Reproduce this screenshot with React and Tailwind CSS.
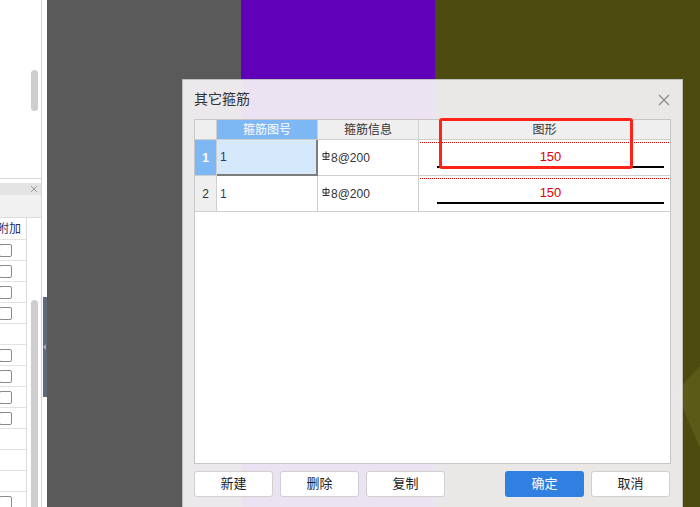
import React from "react";

const font = { fontFamily: '"Liberation Sans", "Noto Sans CJK SC", sans-serif' };

const checkRows = [true, true, true, true, false, true, true, true, true, false, false, false, true];

const SteelMark = () => (
  <svg width="8" height="10" viewBox="0 0 8 10" className="inline-block mr-[1px] -mt-[4px]">
    <path d="M1 2.5h6v3.5H1z M4 0.5v8 M0.5 8.5h7" fill="none" stroke="#333" strokeWidth="1" />
  </svg>
);

const ShapeCell = () => (
  <div className="flex flex-col h-full">
    <div className="mt-[2px] mx-[1px] border-t border-dotted border-[#d40000]" />
    <div className="text-[13px] text-[#e00000] text-center pl-[12px] mt-[6px] leading-[16px]">150</div>
    <div className="ml-[18px] mr-[6px] mt-[1px] h-[2px] bg-black" />
  </div>
);

const Btn = ({ label, primary }) => (
  <button
    className={
      primary
        ? "w-[79px] h-[26px] rounded-[3px] bg-[#2f80e0] text-white text-[13px]"
        : "w-[79px] h-[26px] rounded-[3px] bg-white border border-[#d0d0d0] text-[#222] text-[13px]"
    }
  >
    {label}
  </button>
);

export default function App() {
  return (
    <div className="relative w-[700px] h-[507px] overflow-hidden flex" style={font}>
      {/* left side panel */}
      <div className="relative w-[47px] h-full bg-white shrink-0 overflow-hidden">
        <div className="w-[42px] border-r border-[#d6d6d6] flex flex-col">
          <div className="relative h-[179px] shrink-0 border-b border-[#d6d6d6]">
            <div className="absolute left-[31px] top-[70px] w-[7px] h-[41px] rounded-full bg-[#cdcdcd]" />
          </div>
          <div className="h-[4px] shrink-0" />
          <div className="h-[12px] shrink-0 bg-[#e4e4e4] flex items-center justify-end pr-[3px]">
            <svg width="8" height="8" viewBox="0 0 8 8">
              <path d="M1 1l6 6M7 1l-6 6" stroke="#999" strokeWidth="1" />
            </svg>
          </div>
          <div className="h-[23px] shrink-0 bg-[#f1f1f1] border-b border-[#dcdcdc]" />
          <div className="relative shrink-0">
            <div className="absolute left-[26px] top-0 bottom-0 w-px bg-[#dcdcdc]" />
            <div className="h-[22px] border-b border-[#e2e2e2] flex items-center justify-end w-[26px] pr-[5px] overflow-hidden">
              <span className="text-[12px] text-[#1d2f6b] whitespace-nowrap">附加</span>
            </div>
            {checkRows.map((c, i) => (
              <div key={i} className="h-[21px] w-[26px] border-b border-[#e2e2e2] flex items-center">
                {c && <div className="w-[13px] h-[13px] -ml-[1px] rounded-[2px] border border-[#8a8a8a] bg-white" />}
              </div>
            ))}
            <div className="absolute left-[31px] top-[82px] w-[7px] h-[220px] rounded-t-full bg-[#cdcdcd]" />
          </div>
        </div>
        <div className="absolute left-[43px] top-[297px] w-[4px] h-[100px] bg-[#5f6a78]" />
        <div className="absolute left-[43px] top-[344px] w-0 h-0 border-y-[3px] border-y-transparent border-r-[3px] border-r-[#aab]" />
      </div>

      {/* background columns */}
      <div className="w-[194px] h-full bg-[#5a5a5a] shrink-0" />
      <div className="w-[194px] h-full bg-[#6000b8] shrink-0" />
      <div className="relative flex-1 h-full bg-[#4d4b10]">
        <svg className="absolute right-0 top-[360px]" width="40" height="100" viewBox="0 0 40 100">
          <polygon points="40,6 16,32 40,88" fill="#5c5a17" />
        </svg>
      </div>

      {/* dialog */}
      <div className="absolute left-[182px] top-[79px] w-[501px] h-[440px] border border-[#bdbdbd] bg-[rgba(246,244,246,0.93)] flex flex-col">
        <div className="h-[39px] shrink-0 flex items-center justify-between pl-[11px] pr-[12px]">
          <span className="text-[14px] text-[#333]">其它箍筋</span>
          <svg width="12" height="12" viewBox="0 0 12 12">
            <path d="M1 1l10 10M11 1L1 11" stroke="#8a8a8a" strokeWidth="1.2" />
          </svg>
        </div>

        <div className="mx-[11px] h-[345px] shrink-0 border border-[#c6c6c6] bg-white">
          <div className="grid grid-cols-[22px_101px_101px_1fr] text-[12px]">
            <div className="h-[20px] bg-[#efefef] border-r border-b border-[#cfcfcf]" />
            <div className="h-[20px] bg-[#7db8f4] border-r border-b border-[#cfcfcf] text-white flex items-center justify-center">箍筋图号</div>
            <div className="h-[20px] bg-[#efefef] border-r border-b border-[#cfcfcf] text-[#333] flex items-center justify-center">箍筋信息</div>
            <div className="h-[20px] bg-[#efefef] border-b border-[#cfcfcf] text-[#333] flex items-center justify-center">图形</div>

            <div className="h-[36px] bg-[#7db8f4] border-r border-b border-[#cfcfcf] text-white font-bold flex items-center justify-center">1</div>
            <div className="h-[36px] bg-[#d5e8fc] border-r-2 border-b-2 border-[#7c7c7c] text-[#1d3d70] flex items-center pl-[3px]">1</div>
            <div className="h-[36px] border-r border-b border-[#cfcfcf] text-[#333] flex items-center pl-[4px]">
              <SteelMark />8@200
            </div>
            <div className="h-[36px] border-b border-[#cfcfcf]">
              <ShapeCell />
            </div>

            <div className="h-[36px] bg-[#efefef] border-r border-b border-[#cfcfcf] text-[#333] flex items-center justify-center">2</div>
            <div className="h-[36px] border-r border-b border-[#cfcfcf] text-[#1d3d70] flex items-center pl-[3px]">1</div>
            <div className="h-[36px] border-r border-b border-[#cfcfcf] text-[#333] flex items-center pl-[4px]">
              <SteelMark />8@200
            </div>
            <div className="h-[36px] border-b border-[#cfcfcf]">
              <ShapeCell />
            </div>
          </div>
        </div>

        <div className="mt-[7px] mx-[11px] flex items-center">
          <div className="flex gap-[7px]">
            <Btn label="新建" />
            <Btn label="删除" />
            <Btn label="复制" />
          </div>
          <div className="ml-auto flex gap-[7px] mr-[1px]">
            <Btn label="确定" primary />
            <Btn label="取消" />
          </div>
        </div>

        {/* red highlight annotation */}
        <div className="absolute left-[256px] top-[38px] w-[194px] h-[51px] border-[3px] border-[#ff2318] rounded-[3px]" />
      </div>
    </div>
  );
}
